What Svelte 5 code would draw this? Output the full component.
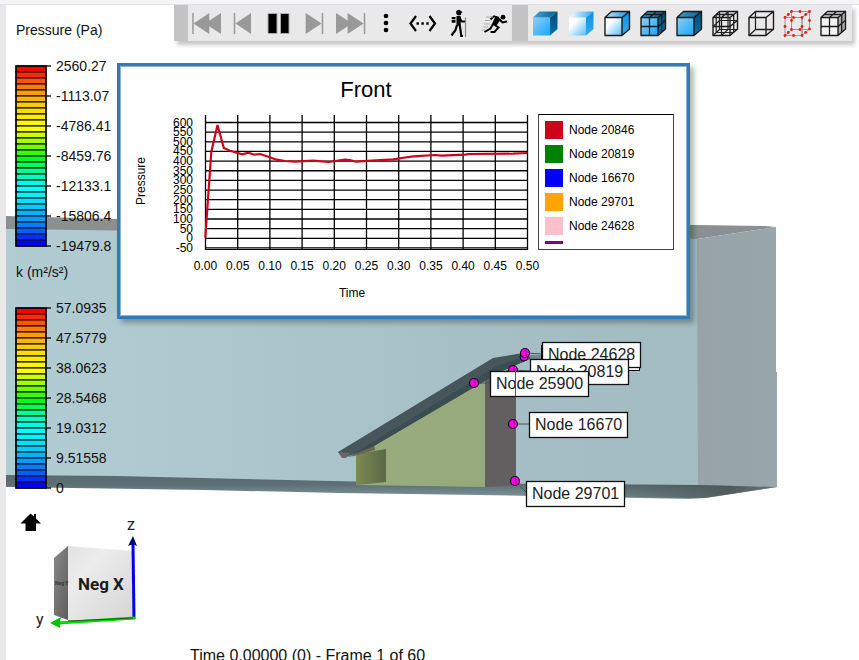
<script>
  const cubeFront = 'M5 12.5H22V30.5H5Z';
  const cubeTop = 'M5 12.5L11.5 6.5H29.5L22 12.5Z';
  const cubeSide = 'M22 12.5L29.5 6.5V24L22 30.5Z';
  const faces = (front, top, side) =>
    `<path d="${cubeFront}" fill="${front}"/><path d="${cubeTop}" fill="${top}"/><path d="${cubeSide}" fill="${side}"/>`;
  const outline = `<path d="${cubeFront}${cubeTop}${cubeSide}" fill="none" stroke="#1b1b1b" stroke-width="1.4" stroke-linejoin="round"/>`;
  const mesh = '<path d="M13.5 30.5V12.5L20.5 6.5M5 21.5H22L29.5 15.2M8.2 9.5H25.7V27.3" fill="none" stroke="#1b1b1b" stroke-width="1.3"/>';
  const hidden = 'M11.5 6.5V24.5M11.5 24.5H29.5M11.5 24.5L5 30.5';

  const playback = [
    { label: 'First frame', art: '<path d="M5 8V29" stroke="#999" stroke-width="1.5"/><path d="M5.5 18.5L21.3 8V29ZM17 18.5L33 8V29Z" fill="#999"/>' },
    { label: 'Previous frame', art: '<path d="M10.5 8V29" stroke="#999" stroke-width="1.5"/><path d="M11.5 18.5L27 8V29Z" fill="#999"/>' },
    { label: 'Pause', art: '<path d="M8 8.5H17V28.5H8ZM20.5 8.5H29V28.5H20.5Z" fill="#000" stroke="#aaa" stroke-width="1"/>' },
    { label: 'Next frame', art: '<path d="M26.5 8V29" stroke="#999" stroke-width="1.5"/><path d="M25.5 18.5L9.7 8V29Z" fill="#999"/>' },
    { label: 'Last frame', art: '<path d="M32.5 8V29" stroke="#999" stroke-width="1.5"/><path d="M31.5 18.5L15.6 8V29ZM20 18.5L4 8V29Z" fill="#999"/>' },
    { label: 'More options', art: '<circle cx="18" cy="11" r="2.3"/><circle cx="18" cy="18" r="2.3"/><circle cx="18" cy="25" r="2.3"/>' },
    { label: 'Animation range', art: '<path d="M12 11L6.5 18.5L12 26M25.5 11L31 18.5L25.5 26" fill="none" stroke="#000" stroke-width="2.2"/><path d="M12.5 17.3h2.4v2.4h-2.4zM17.4 17.3h2.4v2.4h-2.4zM22.3 17.3h2.4v2.4h-2.4z"/>' },
    { label: 'Walk', art: '<path d="M16 6.5Q18.5 3.5 21 6L22.5 7.3L21.2 8V9.5Q18.5 11.5 16.5 9.3Z"/><path d="M11.7 12h3.8v2.3h-3.8zM11.7 15h3.8v2.7h-3.8z"/><path d="M16.5 11H20.5L20.8 20L16.5 21.5Z"/><path d="M19.5 12.5L21.5 16.5H26M17 20L15.5 25L11.5 30.5M19.5 19.5L20.5 25L21.2 31H23" fill="none" stroke="#000" stroke-width="2.2"/><path d="M25.5 12.5V32" stroke="#888" stroke-width="1.2"/>' },
    { label: 'Run', art: '<circle cx="27" cy="12.2" r="2.4"/><path d="M14.5 14.5L18 11.2L23 12.8" fill="none" stroke="#000" stroke-width="1.8"/><path d="M19.5 11L25 14L20.5 20.5L15.8 19.5Z"/><path d="M23.5 14.5L26.5 17.5L31 16.5M18 19.5L22.5 22.5L18.5 27H14.5M17 19L14.5 23.5L8.5 27" fill="none" stroke="#000" stroke-width="2"/><path d="M10 12H17M9 15.5H14M8 19H14M6.5 22H12M5.5 25H9" stroke="#999" stroke-width=".8"/>' },
  ];

  const display = [
    { label: 'Smooth shading', art: faces('url(#faceBlue)', 'url(#topDark)', 'url(#sideDark)') },
    { label: 'Flat light shading', art: faces('url(#faceWhite)', 'url(#topLight)', 'url(#sideLight)') },
    { label: 'Light shading with outline', art: faces('url(#faceWhite)', 'url(#topMid)', 'url(#sideLight)') + outline },
    { label: 'Shading with mesh', art: faces('url(#faceBlue)', 'url(#topDark)', 'url(#sideDark)') + outline + mesh },
    { label: 'Shading with outline', art: faces('url(#faceBlue)', 'url(#topDark)', 'url(#sideDark)') + outline },
    { label: 'Mesh lines', art: outline + mesh + `<path d="${hidden}M20 6.5V24.5L13.5 30.5M11.5 15.5H29.5M11.5 15.5L5 21.5M8.2 9.5V27.5H25.7" fill="none" stroke="#222" stroke-width="1.2"/>` },
    { label: 'Wireframe', art: outline + `<path d="${hidden}" fill="none" stroke="#222" stroke-width="1.3"/>` },
    { label: 'Points', art: `<path d="${cubeFront}${cubeTop}${cubeSide}${hidden}" fill="none" stroke="#999" stroke-width="1"/>` +
      [[5,12.5],[13.5,12.5],[22,12.5],[5,21.5],[22,21.5],[5,30.5],[13.5,30.5],[22,30.5],[11.5,6.5],[20,6.5],[29.5,6.5],[29.5,15.5],[29.5,24],[8.2,9.5],[25.7,9.5],[25.7,27.3],[11.5,15.5],[11.5,24.5],[20,24.5],[8.2,27.5]]
        .map(([x, y]) => `<circle cx="${x}" cy="${y}" r="1.4" fill="#f01818"/>`).join('') },
    { label: 'Hidden line mesh', art: faces('#f4f4f4', '#ddd', '#aaa') + outline + mesh },
  ];

  const bands = ['#ff0000','#ff2b00','#ff5500','#ff7b00','#ff9c00','#ffb400','#ffcc00','#ffdc00','#ffea00','#fff500','#ffff00','#d0ff00','#a0ff00','#70ff00','#38ff00','#00ff18','#00ff55','#00ff90','#00ffbc','#00ffe0','#00ffff','#00f4ff','#00e0ff','#00ccff','#00b4ff','#009cff','#0080ff','#0060ff','#0030ff','#0000ff'];
  const scales = [
    { title: 'Pressure (Pa)', ticks: ['2560.27', '-1113.07', '-4786.41', '-8459.76', '-12133.1', '-15806.4', '-19479.8'] },
    { title: 'k (m²/s²)', ticks: ['57.0935', '47.5779', '38.0623', '28.5468', '19.0312', '9.51558', '0'] },
  ];

  const yTicks = Array.from({ length: 14 }, (_, i) => 600 - i * 50);
  const xTicks = Array.from({ length: 11 }, (_, i) => i * 0.05);
  const yAt = (v) => 171.3 - v * 0.193;
  const xAt = (t) => 84.5 + t * 644;
  const trace = '84.3,170.5 90.3,85 96.5,58 102.8,81 109,83.7 116.7,86 121.3,87.3 127.3,85.7 133.3,87.7 139.3,87 148,90 155.7,92.7 164,94 174,94.7 192.3,93.7 207.3,95 224,92.7 229,93 234.7,94.7 250.7,93.7 272.3,92.3 280.7,91 292.3,89.3 314,88 320.7,88.7 344,87.7 347.3,87 392,86.7 406.5,86';

  const series = [
    ['Node 20846', '#d0021b'],
    ['Node 20819', '#008000'],
    ['Node 16670', '#0000ff'],
    ['Node 29701', '#ffa500'],
    ['Node 24628', '#ffc0cb'],
    ['', '#800080'],
  ];

  const pins = [
    { x: 525, y: 353, bx: 542, by: 342, name: 'Node 24628' },
    { x: 513, y: 370, bx: 530, by: 359, name: 'Node 20819' },
    { x: 474, y: 383, bx: 490, by: 371, name: 'Node 25900' },
    { x: 513, y: 424, bx: 529, by: 412, name: 'Node 16670' },
    { x: 515, y: 481, bx: 526, by: 481, name: 'Node 29701' },
  ];
</script>

<div class="app">
  <div class="strip"></div>
  <div class="body">
    <div class="rail"></div>
    <main class="viewport">
      <svg class="scene" viewBox="6 5 853 655" preserveAspectRatio="xMinYMin slice" aria-label="Building model in wind tunnel">
        <defs>
          <linearGradient id="wall"><stop offset="0" stop-color="#b1cdd3" /><stop offset=".7" stop-color="#a6bfc7" /><stop offset="1" stop-color="#a3bcc1" /></linearGradient>
          <linearGradient id="end"><stop offset="0" stop-color="#97a3a8" /><stop offset="1" stop-color="#98a7ab" /></linearGradient>
          <linearGradient id="floor" x2="0" y2="1"><stop offset="0" stop-color="#5a6b6f" /><stop offset=".4" stop-color="#5c6f74" /><stop offset="1" stop-color="#849ba0" /></linearGradient>
          <linearGradient id="floorEnd"><stop offset="0" stop-color="#485353" stop-opacity="0" /><stop offset=".8" stop-color="#485353" /><stop offset="1" stop-color="#6a787b" /></linearGradient>
          <linearGradient id="shed"><stop offset="0" stop-color="#7c8b55" /><stop offset="1" stop-color="#5a6844" /></linearGradient>
          <linearGradient id="grass"><stop offset="0" stop-color="#99ac7d" /><stop offset="1" stop-color="#96a97a" /></linearGradient>
          <linearGradient id="faceBlue" x2="1" y2="1"><stop offset="0" stop-color="#8bd0f5" /><stop offset="1" stop-color="#18a5fb" /></linearGradient>
          <linearGradient id="faceWhite" x2="1" y2="1"><stop offset=".3" stop-color="#fff" /><stop offset="1" stop-color="#52bdff" /></linearGradient>
          <linearGradient id="topDark"><stop offset="0" stop-color="#47a2cf" /><stop offset="1" stop-color="#005e92" /></linearGradient>
          <linearGradient id="topMid"><stop offset="0" stop-color="#c3e6fb" /><stop offset="1" stop-color="#1490dc" /></linearGradient>
          <linearGradient id="topLight"><stop offset="0" stop-color="#fff" /><stop offset="1" stop-color="#29a7f4" /></linearGradient>
          <linearGradient id="sideDark" x2="0" y2="1"><stop offset="0" stop-color="#004b76" /><stop offset="1" stop-color="#0871a8" /></linearGradient>
          <linearGradient id="sideLight" x2="0" y2="1"><stop offset="0" stop-color="#0a8fe0" /><stop offset="1" stop-color="#37adf2" /></linearGradient>
        </defs>
        <path d="M6 216L118 219L697 225L765 226L776 227L697 239L6 230Z" fill="#8a9092" />
        <path d="M6 229L697 239L699 239V486H6Z" fill="url(#wall)" />
        <path d="M697 239L776 227V372H777V487L698 486Z" fill="url(#end)" />
        <path d="M6 475L115 476L376 482L560 484L698 485L777 487L705 498L690 499L478 495L340 493L205 490L6 487Z" fill="url(#floor)" />
        <path d="M540 484L698 485L777 487L705 498H690L540 496Z" fill="url(#floorEnd)" opacity=".8" />
        <path d="M356 453L372 446L485 376V487L356 485Z" fill="url(#grass)" />
        <path d="M485 376L516 368V485L485 487Z" fill="#625f61" />
        <path d="M356 454L386 449V482L358 485H356Z" fill="url(#shed)" />
        <path d="M347 457L374 445L375 450L354 456Z" fill="#686858" />
        <path d="M338 452L493 358L523 353L531 358L500 372L372 447L343 458Z" fill="#46565a" />
        <path d="M352 455L497 366L524 357L530 359L500 372L374 446Z" fill="#3a4d53" />
        <path d="M338 452L350 453L346 458H342Z" fill="#6b6664" />
        <g fill="#fff" stroke="#000"><circle cx="524" cy="357" r="4" fill="#d400d8" /><path d="M528 356H542M528 358H542" stroke="#3d555c" /><rect x="541.5" y="345.5" width="98" height="25" /></g>
        {#each pins as p}
          <path d="M{p.x} {p.y}L{p.bx} {p.by + (p.by === 481 ? 11 : 12)}" stroke="#3d555c" />
          <circle cx={p.x} cy={p.y} r="4.5" fill="#ff00ee" stroke="#1b0a1b" stroke-width="1.2" />
          <path d="M{p.x + 1} {p.y - 4}V{p.y + 4}" stroke="#7d1f7d" stroke-width="1" />
          <rect x={p.bx + 0.5} y={p.by + 0.5} width="98" height="25" fill="#fff" stroke="#111" stroke-width="1.3" />
          <text x={p.bx + 6} y={p.by + 18} class="pin">{p.name}</text>
        {/each}
        <path d="M515.5 371V396" stroke="#555" />
      </svg>

      <aside class="hud">
        {#each scales as s}
          <section class="legend">
            <h2>{s.title}</h2>
            <div class="scale">
              <svg width="37" height="182" viewBox="0 0 37 182" aria-hidden="true">
                {#each bands as c, i}
                  <rect x="1" y={1 + i * 6} width="30" height="6" fill={c} stroke="#111" stroke-width="1.2" />
                {/each}
                {#each s.ticks as _, i}
                  <path d="M31 {1 + i * 30}H36" stroke="#000" stroke-width="1.3" />
                {/each}
                <path d="M1 1H31V181H1Z" fill="none" stroke="#000" stroke-width="1.3" />
              </svg>
              <ul>
                {#each s.ticks as t}<li>{t}</li>{/each}
              </ul>
            </div>
          </section>
        {/each}
        <div class="navigator">
          <svg width="134" height="130" viewBox="16 510 134 130" role="img" aria-label="Orientation cube">
            <defs>
              <linearGradient id="front" x1="0" y1="0" x2="1" y2="1"><stop offset="0" stop-color="#e2e2e2" /><stop offset=".3" stop-color="#ececec" /><stop offset="1" stop-color="#d5d5d5" /></linearGradient>
              <linearGradient id="left" x2="1" y2="1"><stop offset="0" stop-color="#888" /><stop offset="1" stop-color="#5e5e5e" /></linearGradient>
            </defs>
            <path d="M54 558L68 546V620L54 615Z" fill="url(#left)" />
            <path d="M68 546L132 551L133 618L68 620Z" fill="url(#front)" />
            <text x="55" y="585" class="side">Neg Y</text>
            <text x="78" y="590" class="face">Neg X</text>
            <path d="M134 619L133 544" stroke="#0000f0" stroke-width="3" />
            <path d="M133 536L128 546Q133 543 137 546Z" fill="#000078" />
            <path d="M135 618L58 623" stroke="#00d800" stroke-width="3" />
            <path d="M50 623L61 617Q59 622 60 628Z" fill="#00c400" />
            <path d="M68 621L133 618" stroke="#145c14" />
            <text x="127" y="530" class="axis">z</text>
            <text x="36" y="625" class="axis">y</text>
          </svg>
          <button class="home" aria-label="Home view">
            <svg width="22" height="20" viewBox="20 512 22 20"><path d="M30.5 513.5L34 516.5V514H36V518.5L41 523.5H36V531H25.5V523.5H20.5Z" /></svg>
          </button>
        </div>
      </aside>

      <div class="toolbars">
        <div class="bar" role="toolbar" aria-label="Playback">
          <span class="grip"></span>
          {#each playback as b}
            <button aria-label={b.label}><svg width="36" height="36" viewBox="0 0 36 36">{@html b.art}</svg></button>
          {/each}
        </div>
        <div class="bar" role="toolbar" aria-label="Display mode">
          <span class="grip wide"></span>
          {#each display as b}
            <button aria-label={b.label}><svg width="36" height="36" viewBox="0 0 36 36">{@html b.art}</svg></button>
          {/each}
        </div>
      </div>

      <section class="chart">
        <svg class="plot" width="417" height="248" viewBox="0 0 417 248" role="img" aria-label="Pressure over time">
          <text x="245" y="30" class="title" text-anchor="middle">Front</text>
          <text class="tick" text-anchor="middle" transform="translate(24 114) rotate(-90)">Pressure</text>
          {#each yTicks as v}
            <path d="M84 {yAt(v)}H407" stroke="#000" stroke-width="1.3" />
            <text x="72" y={yAt(v) + 4} class="tick" text-anchor="end">{v}</text>
          {/each}
          {#each xTicks as t}
            <path d="M{xAt(t)} 48V183" stroke="#000" stroke-width="1.3" />
            <text x={xAt(t)} y="203" class="tick" text-anchor="middle">{t.toFixed(2)}</text>
          {/each}
          <path d="M84 182.5H407" stroke="#000" />
          <polyline points={trace} fill="none" stroke="#d0021b" stroke-width="2.2" />
          <text x="231" y="230" class="tick" text-anchor="middle">Time</text>
        </svg>
        <div class="key">
          <ul>
            {#each series as [name, color]}
              <li><span class="swatch" style:background={color}></span>{name}</li>
            {/each}
          </ul>
        </div>
      </section>

      <p class="status">Time 0.00000 (0) - Frame 1 of 60</p>
    </main>
  </div>
</div>

<style>
  :global(body) { margin: 0; background: #fff; }
  .app { display: flex; flex-direction: column; height: 100vh; overflow: hidden; font-family: "Liberation Sans", Arial, sans-serif; color: #111; }
  .strip { height: 4px; flex: none; background: #f5f5f6; border-bottom: 1px solid #dce1e9; }
  .body { flex: 1; display: flex; min-height: 0; }
  .rail { width: 6px; flex: none; background: #e9e9e9; }
  .viewport { position: relative; flex: 1; min-width: 0; overflow: hidden; }
  .scene { position: absolute; inset: 0; width: 100%; height: 100%; }
  ul { list-style: none; margin: 0; padding: 0; }
  button { border: 0; padding: 0; background: none; display: block; cursor: pointer; }
  svg { display: block; }
  text { fill: #000; }
  .pin { font-size: 16px; fill: #222; }

  .hud { position: absolute; top: 15px; left: 9px; display: flex; flex-direction: column; gap: 1px; }
  h2 { margin: 0 0 11px 1px; font-size: 14px; line-height: 20px; font-weight: 400; }
  .scale { display: flex; align-items: center; gap: 4px; }
  .scale li { font-size: 14px; line-height: 30px; }
  .navigator { position: relative; margin: 6px 0 0 1px; }
  .home { position: absolute; top: 2px; left: 4px; }
  .face { font: 700 17px Roboto, sans-serif; fill: #1c1c1c; }
  .side { font: 700 5px Roboto, sans-serif; fill: #333; }
  .axis { font: 400 16px Roboto, sans-serif; fill: #222; }

  .toolbars { position: absolute; top: 0; right: 7px; display: flex; }
  .bar { display: flex; height: 36px; background: #e9e9e9; box-shadow: 3px 4px 4px rgba(0, 0, 0, 0.22); }
  .grip { width: 14px; background: #c4c4c4; }
  .wide { width: 16px; }

  .chart { position: absolute; top: 58px; left: 111px; display: flex; align-items: flex-start; padding: 1px 13px 1px 1px; background: #fff; border: 3px solid #337ab7; box-shadow: inset 0 0 0 1px #8db4d8, 4px 4px 5px rgba(0, 0, 0, 0.28); }
  .plot { overflow: visible; }
  .title { font-size: 22px; }
  .tick { font-size: 12px; }
  .key { box-sizing: border-box; width: 136px; height: 136px; margin-top: 47px; padding: 6px; border: 1px solid #444; border-top-color: #000; }
  .key ul { height: 123px; overflow: hidden; }
  .key li { display: flex; gap: 6px; height: 18px; margin-bottom: 6px; font-size: 12px; line-height: 18px; color: #000; }
  .swatch { width: 18px; height: 18px; }

  .status { position: absolute; left: 184px; bottom: -5px; margin: 0; font-size: 16px; line-height: 18px; }
</style>
